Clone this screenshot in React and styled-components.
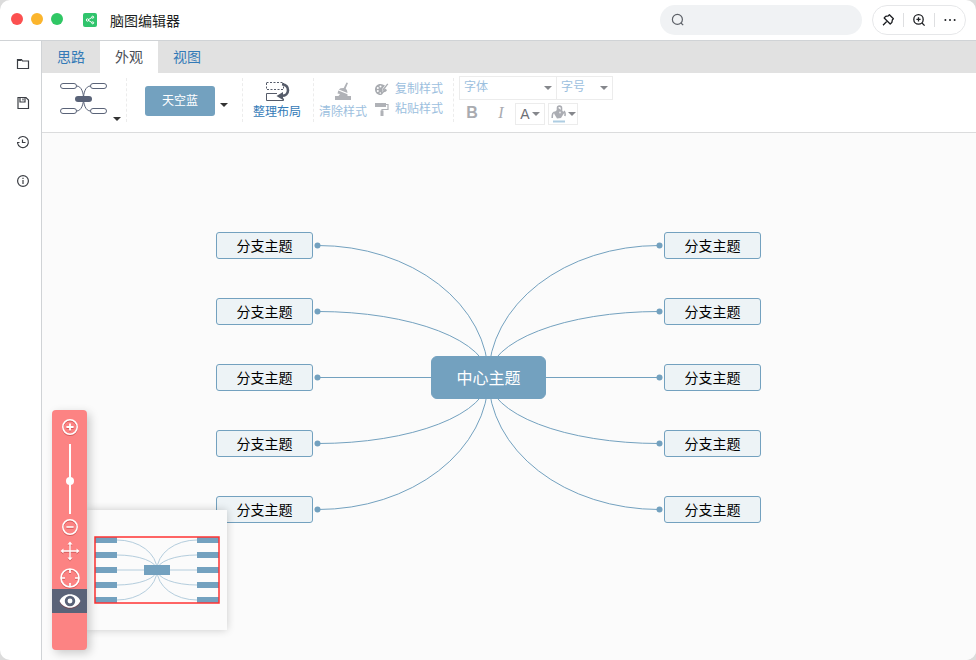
import React, { useState } from "react";
import styled, { createGlobalStyle } from "styled-components";

const BLUE = "#73a1bf";

const GlobalStyle = createGlobalStyle`
  * { box-sizing: border-box; }
  body { margin: 0; background: #dcdcdc; font-family: "Liberation Sans", "Noto Sans CJK SC", sans-serif; }
  button { font-family: inherit; border: 0; padding: 0; background: none; cursor: pointer; }
  svg { display: block; flex: none; }
`;

const Window = styled.div`
  min-height: 100vh;
  display: flex;
  flex-direction: column;
  background: #fff;
  border-radius: 10px;
  overflow: hidden;
`;

const TitleBar = styled.header`
  display: flex;
  align-items: center;
  height: 41px;
  padding: 0 10px 0 11px;
  border-bottom: 1px solid #d0d3d6;
`;

const TrafficLights = styled.div`
  display: flex;
  gap: 8px;
  margin-right: 20px;
  padding-bottom: 2px;
`;

const Light = styled.button`
  width: 12px;
  height: 12px;
  border-radius: 50%;
  background: ${(p) => p.$color};
`;

const Title = styled.h1`
  flex: 1;
  margin: 0 0 0 13px;
  font-size: 14px;
  line-height: 22px;
  padding-top: 2px;
  font-weight: 400;
  color: #1d1f23;
`;

const SearchBox = styled.label`
  display: flex;
  align-items: center;
  gap: 8px;
  width: 202px;
  height: 30px;
  padding: 0 11px;
  border-radius: 15px;
  background: #f0f2f4;
`;

const SearchInput = styled.input`
  flex: 1;
  min-width: 0;
  border: 0;
  outline: 0;
  background: transparent;
  font-size: 13px;
`;

const WindowActions = styled.div`
  display: flex;
  align-items: center;
  width: 94px;
  height: 30px;
  margin-left: 10px;
  border: 1px solid #e6e7e9;
  border-radius: 15px;
`;

const WindowAction = styled.button`
  flex: 1;
  display: flex;
  justify-content: center;
  align-items: center;
  height: 14px;
  & + & { border-left: 1px solid #dedfe1; }
`;

const Body = styled.div`
  flex: 1;
  display: flex;
`;

const Sidebar = styled.nav`
  display: flex;
  flex-direction: column;
  align-items: center;
  gap: 23px;
  width: 42px;
  padding: 15px 0 0 4px;
  border-right: 1px solid #d0d3d6;
`;

const SideButton = styled.button`
  display: flex;
  align-items: center;
  justify-content: center;
  width: 16px;
  height: 16px;
`;

const Main = styled.main`
  flex: 1;
  min-width: 0;
  display: flex;
  flex-direction: column;
`;

const TabBar = styled.div`
  display: flex;
  height: 32px;
  background: #e1e1e1;
`;

const Tab = styled.button`
  width: 58px;
  font-size: 14px;
  line-height: 32px;
  color: ${(p) => (p.$active ? "#4a4d55" : "#337ab7")};
  background: ${(p) => (p.$active ? "#fff" : "transparent")};
`;

const Toolbar = styled.div`
  display: flex;
  align-items: flex-start;
  height: 60px;
  padding: 3px 0 0 17px;
  border-bottom: 1px solid #dbdcdd;
`;

const Group = styled.div`
  display: flex;
  height: 44px;
  margin-top: 2px;
  width: ${(p) => p.$width}px;
  padding-left: ${(p) => p.$inset}px;
  border-right: 1px dashed #ececec;
`;

const TemplateButton = styled.button`
  display: flex;
  align-items: flex-end;
  gap: 4px;
  height: 43px;
`;

const ThemeButton = styled.button`
  width: 70px;
  height: 30px;
  margin: 8px 5px 0 0;
  border-radius: 3px;
  background: ${BLUE};
  color: #fff;
  font-size: 12px;
  line-height: 30px;
`;

const CaretButton = styled.button`
  display: flex;
  height: 30px;
  padding-top: 25px;
`;

const ToolButton = styled.button`
  display: flex;
  flex-direction: column;
  align-items: center;
  gap: 2px;
  width: 50px;
  height: 43px;
  padding-top: 3px;
  font-size: 12px;
  line-height: 18px;
  color: ${(p) => (p.$muted ? "#9cc0de" : "#337ab7")};
`;

const StyleActions = styled.div`
  display: flex;
  flex-direction: column;
  margin-left: 6px;
  padding-top: 1px;
`;

const StyleAction = styled.button`
  display: flex;
  align-items: center;
  gap: 6px;
  height: 20px;
  font-size: 12px;
  line-height: 18px;
  color: #9cc0de;
`;

const FontTools = styled.div`
  display: flex;
  flex-direction: column;
  gap: 3px;
  margin-left: 5px;
`;

const FontRow = styled.div`
  display: flex;
`;

const SelectFrame = styled.div`
  position: relative;
  width: ${(p) => p.$width}px;
  height: 24px;
  border: 1px solid #ececec;
  & + & { border-left: 0; }
`;

const Select = styled.select`
  appearance: none;
  width: 100%;
  height: 20px;
  padding: 0 4px;
  border: 0;
  background: transparent;
  color: #9cc0de;
  font-family: inherit;
  font-size: 12px;
`;

const SelectCaret = styled.span`
  position: absolute;
  right: 4px;
  top: 9px;
  pointer-events: none;
`;

const LetterButton = styled.button`
  width: 28px;
  height: 20px;
  color: #a9abb0;
  font-size: 16px;
  line-height: 20px;
  padding-right: ${(p) => (p.$italic ? 0 : 2)}px;
  font-weight: ${(p) => (p.$italic ? 400 : 700)};
  font-family: ${(p) => (p.$italic ? '"Liberation Serif", serif' : "inherit")};
  font-style: ${(p) => (p.$italic ? "italic" : "normal")};
`;

const ColorButton = styled.button`
  display: flex;
  align-items: center;
  justify-content: center;
  gap: 2px;
  width: 30px;
  height: 22px;
  margin-right: 3px;
  border: 1px solid #ececec;
  color: #6c6e74;
  font-size: 14px;
  line-height: 18px;
`;

const Canvas = styled.section`
  position: relative;
  flex: 1;
  min-height: 527px;
  background: #fbfbfb;
`;

const Links = styled.svg`
  position: absolute;
  left: 0;
  top: 0;
`;

const Branch = styled.div`
  position: absolute;
  left: ${(p) => p.$x}px;
  top: ${(p) => p.$y}px;
  width: 97px;
  height: 27px;
  border: 1px solid ${BLUE};
  border-radius: 3px;
  background: #edf3f6;
  color: #000;
  font-size: 14px;
  line-height: 27px;
  text-align: center;
`;

const Root = styled(Branch)`
  width: 115px;
  height: 43px;
  border-radius: 6px;
  background: ${BLUE};
  color: #fff;
  font-size: 16px;
  line-height: 43px;
`;

const Overlay = styled.div`
  position: absolute;
  left: 10px;
  bottom: 10px;
  display: flex;
  align-items: flex-end;
`;

const ZoomPanel = styled.div`
  position: relative;
  z-index: 1;
  display: flex;
  flex-direction: column;
  align-items: center;
  width: 35px;
  height: 240px;
  padding-top: 8px;
  border-radius: 4px;
  background: #fc8383;
  box-shadow: 3px 3px 10px rgba(0, 0, 0, 0.2);
  svg { filter: drop-shadow(0 1px 0 rgba(150, 30, 30, 0.4)); }
`;

const PanelButton = styled.button`
  display: flex;
  align-items: center;
  justify-content: center;
  width: 35px;
  height: ${(p) => p.$height}px;
  background: ${(p) => (p.$active ? "#5a6378" : "transparent")};
`;

const ZoomSlider = styled.input`
  appearance: none;
  writing-mode: vertical-lr;
  direction: rtl;
  width: 8px;
  height: 70px;
  margin: 8px 0 4px;
  background: linear-gradient(#fff, #fff) center / 2px 100% no-repeat;
  &::-webkit-slider-thumb {
    appearance: none;
    width: 8px;
    height: 8px;
    border-radius: 50%;
    background: #fff;
  }
`;

const Preview = styled.div`
  display: flex;
  width: 140px;
  height: 120px;
  margin-bottom: 20px;
  background: #fff;
  box-shadow: 0 0 8px rgba(0, 0, 0, 0.2);
  border-radius: 0 2px 2px 0;
`;

const Caret = ({ color = "#333" }) => (
  <svg width="8" height="4" viewBox="0 0 8 4" aria-hidden="true">
    <path d="M0 0h8L4 4z" fill={color} />
  </svg>
);

const LogoIcon = () => (
  <svg width="14" height="14" viewBox="0 0 14 14" aria-hidden="true">
    <rect width="14" height="14" rx="2" fill="#30c46c" />
    <g stroke="#fff" fill="none">
      <path d="M9 4.4 4.8 7 9 9.6" />
      <circle cx="4.5" cy="7" r="1.2" fill="#30c46c" />
      <circle cx="9.7" cy="4.2" r="1" fill="#30c46c" />
      <circle cx="9.7" cy="9.8" r="1" fill="#30c46c" />
    </g>
  </svg>
);

const SearchIcon = () => (
  <svg width="14" height="14" viewBox="0 0 14 14" fill="none" stroke="#5d6168" strokeWidth="1.2" aria-hidden="true">
    <circle cx="6.4" cy="6.4" r="5" />
    <path d="m10 10 2.2 2.2" />
  </svg>
);

const PinIcon = () => (
  <svg width="14" height="14" viewBox="0 0 14 14" fill="none" stroke="#1d1f23" strokeWidth="1.3" strokeLinejoin="round" aria-hidden="true">
    <path d="M8.4 1.8 12.4 5.8 11.4 6.8 10.8 9.6 9.2 11 3.2 5 4.6 3.4 7.4 2.8zM6.2 8 2 12.2" />
  </svg>
);

const MagnifyIcon = () => (
  <svg width="14" height="14" viewBox="0 0 14 14" fill="none" stroke="#1d1f23" strokeWidth="1.3" aria-hidden="true">
    <circle cx="6.5" cy="6.4" r="4.7" />
    <path d="m10 10 2.6 2.6M6.5 4.3v4.2M4.4 6.4h4.2" />
  </svg>
);

const MoreIcon = () => (
  <svg width="14" height="14" viewBox="0 0 14 14" fill="#1d1f23" aria-hidden="true">
    <circle cx="2.4" cy="7" r="1" />
    <circle cx="7" cy="7" r="1" />
    <circle cx="11.6" cy="7" r="1" />
  </svg>
);

const SideIcon = ({ children }) => (
  <svg width="14" height="14" viewBox="0 0 14 14" fill="none" stroke="#3b3e44" strokeWidth="1.2" aria-hidden="true">
    {children}
  </svg>
);

const TemplateIcon = () => (
  <svg width="50" height="39" viewBox="0 0 50 39" fill="none" stroke="#5a6378" aria-hidden="true">
    <rect x="1.5" y="1.5" width="16" height="5" rx="2.5" />
    <rect x="31.5" y="1.5" width="16" height="5" rx="2.5" />
    <rect x="1.5" y="26.5" width="16" height="5" rx="2.5" />
    <rect x="31.5" y="26.5" width="16" height="5" rx="2.5" />
    <path d="M17.5 4c5 0 7 7 7 12.5s-2 12.5-7 12.5M31.5 4c-5 0-7 7-7 12.5s2 12.5 7 12.5" />
    <rect x="16" y="14" width="17" height="6" rx="3" fill="#5a6378" stroke="none" />
  </svg>
);

const LayoutIcon = () => (
  <svg width="26" height="20" viewBox="0 0 26 20" fill="none" stroke="#555b69" aria-hidden="true">
    <rect x="2.5" y="1.5" width="17" height="7" strokeDasharray="2 1.5" />
    <path d="M13 12.5H2.5v7h17v-2" />
    <path d="M18 3.3c3.5 .4 6 2.7 6 6s-2.5 5.5-6 5.5" strokeWidth="2.6" />
    <path d="m12.5 15 6.5-4v8z" fill="#555b69" stroke="none" />
  </svg>
);

const BroomIcon = () => (
  <svg width="18" height="20" viewBox="0 0 18 20" fill="#b0b2b7" aria-hidden="true">
    <path d="m12.5 1.5 1.5.6-2.3 5.4 1.3 1.8.5 2.7-8.7-3.5 1.7-1.3 3.2-.3zM4.3 9.5l9.2 3.7v1.8H17V19H1v-4h3.5l1.5-2-2.5-.5z" />
  </svg>
);

const PaletteIcon = () => (
  <svg width="15" height="14" viewBox="0 0 15 14" aria-hidden="true">
    <path d="M6.5 2C3 2 1 4.5 1 7.5S3.4 13 6.5 13c2.200 0 2-1.800 3.200-2.600 1.100-.7 2.900-.4 3.300-2.400L11 6.500 8 10l.5-3.500 2.500-3C9.500 2.500 8 2 6.500 2z" fill="#a9acb1" />
    <path d="m8.200 9.500.6-2.400L13.300 1.500l1 .8-4.500 5.800z" fill="#a9acb1" />
    <g fill="#fff">
      <circle cx="3.8" cy="6" r="1" />
      <circle cx="6.5" cy="4.4" r="1" />
      <circle cx="3.8" cy="9" r="1" />
      <circle cx="6.3" cy="11" r=".8" />
    </g>
  </svg>
);

const RollerIcon = () => (
  <svg width="15" height="14" viewBox="0 0 15 14" fill="none" aria-hidden="true">
    <rect x="1" y="1" width="11" height="4" fill="#b0b2b7" />
    <path d="M12 2.500h2v5H8v2" stroke="#b0b2b7" strokeWidth="1.2" />
    <rect x="6.5" y="8.5" width="3" height="5.5" fill="#b0b2b7" />
  </svg>
);

const BucketIcon = () => (
  <svg width="15" height="18" viewBox="0 0 15 18" aria-hidden="true">
    <path d="M7.5 3 13.5 7.5 10 13 6 13.5 3 8.5z" fill="#abadb3" />
    <path d="M6.5 7V3c0-2.500 4-2.500 4 0v3M5 7C1.500 7 1.200 9 1.200 13M13 6c1.500 2 1.500 3 .8 5" fill="none" stroke="#abadb3" strokeWidth="1.6" />
    <circle cx="9" cy="7.5" r="1" fill="#e3e4e6" />
    <rect x="2" y="15.5" width="12" height="2" fill="#aecde2" />
  </svg>
);

const PanelIcon = ({ children, size = 20 }) => (
  <svg width={size} height={size} viewBox="0 0 20 20" fill="none" stroke="#fff" strokeWidth="1.7" aria-hidden="true">
    {children}
  </svg>
);

const rows = [0, 1, 2, 3, 4];
const rowY = (i) => 99 + i * 66;

const linkPath = (side, i) => {
  const dy = (i - 2) * 66;
  const x = side < 0 ? 276 : 617;
  if (dy === 0) return `M${x} 244.5H446.5`;
  const sweep = side * dy > 0 ? 1 : 0;
  return `M${x} ${244.5 + dy}A${Math.abs(446.5 - x)} ${Math.abs(dy)} 0 0 ${sweep} 446.5 244.5`;
};

const previewLink = (n) => {
  if (n === 0) return "M30 60H110";
  const ry = Math.abs(n) * 15;
  const y = 60 + n * 15;
  const sweep = n < 0 ? 1 : 0;
  return `M30 ${y}A40 ${ry} 0 0 ${sweep} 70 60A40 ${ry} 0 0 ${sweep} 110 ${y}`;
};

const PreviewMap = () => (
  <svg width="140" height="120" viewBox="0 0 140 120" aria-hidden="true">
    <rect width="140" height="120" fill="#fbfbfb" />
    <g fill="none" stroke="#b4cddd">
      {[-2, -1, 0, 1, 2].map((n) => (
        <path key={n} d={previewLink(n)} />
      ))}
    </g>
    <g fill={BLUE}>
      {[27, 42, 57, 72, 87].map((y) => (
        <React.Fragment key={y}>
          <rect x="8" y={y} width="22" height="6" />
          <rect x="110" y={y} width="22" height="6" />
        </React.Fragment>
      ))}
      <rect x="57" y="55" width="26" height="10" />
    </g>
    <rect x="8" y="27" width="124" height="66" fill="none" stroke="#f33" strokeWidth="1.5" />
  </svg>
);

const tabs = ["思路", "外观", "视图"];

export default function App() {
  const [active, setActive] = useState("外观");
  const [zoom, setZoom] = useState(47);
  return (
    <>
      <GlobalStyle />
      <Window>
        <TitleBar>
          <TrafficLights>
            <Light $color="#fc5050" aria-label="关闭" />
            <Light $color="#fbb52d" aria-label="最小化" />
            <Light $color="#30c764" aria-label="最大化" />
          </TrafficLights>
          <LogoIcon />
          <Title>脑图编辑器</Title>
          <SearchBox>
            <SearchIcon />
            <SearchInput aria-label="搜索" />
          </SearchBox>
          <WindowActions>
            <WindowAction aria-label="固定"><PinIcon /></WindowAction>
            <WindowAction aria-label="放大"><MagnifyIcon /></WindowAction>
            <WindowAction aria-label="更多"><MoreIcon /></WindowAction>
          </WindowActions>
        </TitleBar>
        <Body>
          <Sidebar>
            <SideButton aria-label="打开">
              <SideIcon><path d="M1.5 11.5v-9h4l1 1.5h6v7.5z" /><path d="M1.5 3h4" strokeWidth="2" /></SideIcon>
            </SideButton>
            <SideButton aria-label="保存">
              <SideIcon><path d="M2 1.5h8l2.5 2.5v8.5H2z" /><path d="M4 1.5v4.5h5V1.5M7 2.5v2" /></SideIcon>
            </SideButton>
            <SideButton aria-label="历史">
              <SideIcon><path d="M2.3 4A5.5 5.5 0 1 1 1.5 8M6.5 4.5v3h3" /><path d="M1 7.5h2.5" /></SideIcon>
            </SideButton>
            <SideButton aria-label="关于">
              <SideIcon><circle cx="7" cy="7" r="5.4" /><path d="M7 6v4M7 3.8v1.3" /></SideIcon>
            </SideButton>
          </Sidebar>
          <Main>
            <TabBar role="tablist">
              {tabs.map((t) => (
                <Tab key={t} role="tab" aria-selected={active === t} $active={active === t} onClick={() => setActive(t)}>
                  {t}
                </Tab>
              ))}
            </TabBar>
            <Toolbar>
              <Group $width={68} $inset={0}>
                <TemplateButton aria-label="选择结构">
                  <TemplateIcon />
                  <Caret />
                </TemplateButton>
              </Group>
              <Group $width={116} $inset={18}>
                <ThemeButton>天空蓝</ThemeButton>
                <CaretButton aria-label="选择主题"><Caret /></CaretButton>
              </Group>
              <Group $width={71} $inset={9}>
                <ToolButton><LayoutIcon />整理布局</ToolButton>
              </Group>
              <Group $width={140} $inset={4}>
                <ToolButton $muted><BroomIcon />清除样式</ToolButton>
                <StyleActions>
                  <StyleAction><PaletteIcon />复制样式</StyleAction>
                  <StyleAction><RollerIcon />粘贴样式</StyleAction>
                </StyleActions>
              </Group>
              <FontTools>
                <FontRow>
                  <SelectFrame $width={98}>
                    <Select aria-label="字体"><option>字体</option></Select>
                    <SelectCaret><Caret color="#85878c" /></SelectCaret>
                  </SelectFrame>
                  <SelectFrame $width={56}>
                    <Select aria-label="字号"><option>字号</option></Select>
                    <SelectCaret><Caret color="#85878c" /></SelectCaret>
                  </SelectFrame>
                </FontRow>
                <FontRow>
                  <LetterButton aria-label="加粗">B</LetterButton>
                  <LetterButton aria-label="斜体" $italic>I</LetterButton>
                  <ColorButton aria-label="文字颜色">A<Caret color="#85878c" /></ColorButton>
                  <ColorButton aria-label="背景颜色"><BucketIcon /><Caret color="#85878c" /></ColorButton>
                </FontRow>
              </FontTools>
            </Toolbar>
            <Canvas>
              <Links width="760" height="500" viewBox="0 0 760 500" aria-hidden="true">
                {rows.map((i) => (
                  <g key={i} fill="none" stroke={BLUE}>
                    <path d={linkPath(-1, i)} />
                    <path d={linkPath(1, i)} />
                    <circle cx="275.5" cy={112.5 + i * 66} r="3" fill={BLUE} stroke="none" />
                    <circle cx="617.5" cy={112.5 + i * 66} r="3" fill={BLUE} stroke="none" />
                  </g>
                ))}
              </Links>
              {rows.map((i) => (
                <React.Fragment key={i}>
                  <Branch $x={174} $y={rowY(i)}>分支主题</Branch>
                  <Branch $x={622} $y={rowY(i)}>分支主题</Branch>
                </React.Fragment>
              ))}
              <Root $x={389} $y={223}>中心主题</Root>
              <Overlay>
                <ZoomPanel>
                  <PanelButton $height={18} aria-label="放大">
                    <PanelIcon size={18}><circle cx="10" cy="10" r="8" /><path d="M10 6v8M6 10h8" strokeWidth="2" /></PanelIcon>
                  </PanelButton>
                  <ZoomSlider type="range" aria-label="缩放" value={zoom} onChange={(e) => setZoom(Number(e.target.value))} />
                  <PanelButton $height={18} aria-label="缩小">
                    <PanelIcon size={18}><circle cx="10" cy="10" r="8" /><path d="M6 10h8" /></PanelIcon>
                  </PanelButton>
                  <PanelButton $height={30} aria-label="拖动画布">
                    <PanelIcon><path d="M10 2v16M2 10h16" strokeWidth="1.4" /><path d="m7.500 3.500 2.500-3 2.500 3zM7.500 16.500l2.500 3 2.500-3zM3.500 7.500l-3 2.500 3 2.500zM16.500 7.500l3 2.500-3 2.500z" fill="#fff" stroke="none" /></PanelIcon>
                  </PanelButton>
                  <PanelButton $height={23} aria-label="定位根节点">
                    <PanelIcon><circle cx="10" cy="10" r="9" /><path d="M10 1v4M10 15v4M1 10h4M15 10h4" /></PanelIcon>
                  </PanelButton>
                  <PanelButton $height={24} $active aria-label="导航器">
                    <PanelIcon size={22}><path d="M.5 10C4 1.800 16 1.800 19.500 10 16 18.200 4 18.200.5 10z" fill="#fff" stroke="none" /><circle cx="10" cy="10" r="3.500" stroke="#5a6378" strokeWidth="2.5" /></PanelIcon>
                  </PanelButton>
                </ZoomPanel>
                <Preview><PreviewMap /></Preview>
              </Overlay>
            </Canvas>
          </Main>
        </Body>
      </Window>
    </>
  );
}
